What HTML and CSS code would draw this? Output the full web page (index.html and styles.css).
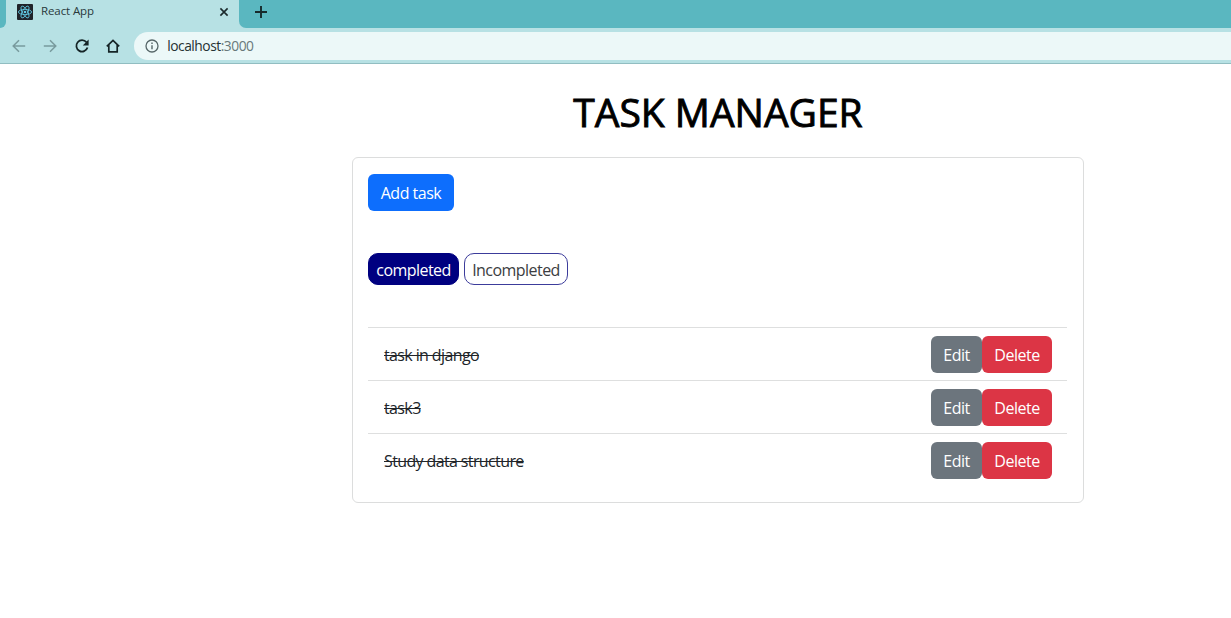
FILE: index.html
```html
<!DOCTYPE html>
<html lang="en">
<head>
<meta charset="utf-8">
<title>React App</title>
<link rel="stylesheet" href="styles.css">
</head>
<body>
<header class="browser">
  <div class="tabs">
    <div class="tab-before"></div>
    <div class="tab">
      <svg class="favicon" width="16" height="16" viewBox="0 0 16 16"><rect width="16" height="16" rx="1" fill="#20232a"/><g fill="none" stroke="#61c9e4" stroke-width=".85"><ellipse cx="8" cy="8" rx="6.6" ry="2.6"/><ellipse cx="8" cy="8" rx="6.6" ry="2.6" transform="rotate(60 8 8)"/><ellipse cx="8" cy="8" rx="6.6" ry="2.6" transform="rotate(120 8 8)"/></g><circle cx="8" cy="8" r="1.3" fill="#61c9e4"/></svg>
      <span class="tab-title">React App</span>
      <svg class="close" width="10" height="10" viewBox="0 0 10 10"><path d="M1.4 1.4l7.2 7.2M8.6 1.4L1.4 8.6" stroke="#1b2a2c" stroke-width="1.6"/></svg>
    </div>
    <div class="tab-after">
      <svg width="14" height="14" viewBox="0 0 14 14"><path d="M7 1v12M1 7h12" stroke="#162a2c" stroke-width="1.9"/></svg>
    </div>
  </div>
  <div class="toolbar">
    <svg class="nav" width="16" height="16" viewBox="0 0 16 16"><path d="M14.2 8H2.2M8 2.2L2.2 8L8 13.8" fill="none" stroke="#789a9d" stroke-width="1.5"/></svg>
    <svg class="nav" width="16" height="16" viewBox="0 0 16 16"><path d="M1.8 8h12M8 2.2L13.8 8L8 13.8" fill="none" stroke="#789a9d" stroke-width="1.5"/></svg>
    <svg class="nav" width="16" height="16" viewBox="0 0 16 16"><path d="M12.5 4.3A5.7 5.7 0 1 0 13.5 9.6" fill="none" stroke="#152426" stroke-width="1.8"/><path d="M14.6 1.5v5.9H8.8z" fill="#152426"/></svg>
    <svg class="nav" width="16" height="16" viewBox="0 0 16 16"><path d="M1.8 8.4L8 2.4l6.2 6M3.8 7v6.8h8.4V7" fill="none" stroke="#152426" stroke-width="1.7"/></svg>
    <div class="address">
      <svg width="14" height="14" viewBox="0 0 14 14"><circle cx="7" cy="7" r="6" fill="none" stroke="#566668" stroke-width="1.3"/><path d="M7 6.2v4M7 3.6v1.4" stroke="#566668" stroke-width="1.4"/></svg>
      <span class="url">localhost<span class="port">:3000</span></span>
    </div>
  </div>
</header>
<main class="page">
  <h1 class="title">TASK MANAGER</h1>
  <section class="card">
    <button class="btn add">Add task</button>
    <div class="filters">
      <span class="pill active">completed</span>
      <span class="pill">Incompleted</span>
    </div>
    <ul class="list">
      <li class="item"><span class="task">task in django</span><button class="btn edit">Edit</button><button class="btn delete">Delete</button></li>
      <li class="item"><span class="task">task3</span><button class="btn edit">Edit</button><button class="btn delete">Delete</button></li>
      <li class="item"><span class="task">Study data structure</span><button class="btn edit">Edit</button><button class="btn delete">Delete</button></li>
    </ul>
  </section>
</main>
</body>
</html>
```
FILE: styles.css
```css
* { box-sizing: border-box; }
body { margin: 0; height: 618px; overflow: hidden; background: #fff; color: #212529; font-family: "Open Sans", "Noto Sans", sans-serif; font-size: 16px; }
.browser { height: 64px; background: #b7e1e4; border-bottom: 1px solid #91bdc1; }
.tabs { display: flex; height: 28px; }
.tab-before { width: 6px; background: #5ab7c0; border-bottom-right-radius: 6px; }
.tab { width: 233px; display: flex; align-items: center; height: 24px; padding: 0 10px 0 11px; }
.tab-title { margin-left: 8px; font-size: 11.5px; letter-spacing: -0.1px; color: #29393b; line-height: 22px; margin-top: -2px; }
.close { margin-left: auto; }
.tab-after { flex: 1; background: #5ab7c0; border-bottom-left-radius: 7px; padding: 5px 0 0 15px; }
.tab-after svg { display: block; }
.toolbar { display: flex; align-items: center; height: 35px; padding-left: 11px; }
.nav { flex: none; margin-right: 15.3px; }
.address { flex: 1; display: flex; align-items: center; height: 28px; margin-left: -2px; padding-left: 11px; background: #ecf8f8; border-radius: 14px 0 0 14px; }
.url { margin: -1px 0 0 8px; font-size: 13.8px; letter-spacing: -0.48px; color: #263133; }
.port { color: #68787a; }
.page { width: 732px; margin-left: 352px; }
.title { margin: 24px 0 21px; font-size: 39px; line-height: 48px; font-weight: 500; color: #000; text-align: center; white-space: nowrap; -webkit-text-stroke: 0.9px #000; }
.card { height: 346px; border: 1px solid #dcdddd; border-radius: 6px; padding: 16px 16px 16px 15px; }
.btn { display: flex; align-items: center; justify-content: center; height: 37px; padding: 0; border: 0; border-radius: 6px; color: #fff; font: inherit; letter-spacing: -0.5px; white-space: nowrap; }
.add { width: 86px; background: #0d6efd; }
.filters { display: flex; gap: 5px; margin-top: 42px; }
.pill { display: flex; align-items: center; justify-content: center; width: 104px; height: 32px; padding-top: 2px; border: 1px solid #3c3c9b; border-radius: 10px; color: #3b3d41; letter-spacing: -0.55px; }
.active { width: 91px; background: #000080; border-color: #000080; color: #fff; }
.list { list-style: none; margin: 42px 0 0; padding: 0; }
.item { display: flex; align-items: center; height: 53px; padding: 0 15px 0 16px; border-top: 1px solid #dedfdf; }
.item .btn { padding-top: 2px; }
.task { margin-right: auto; padding-top: 2px; text-decoration: line-through 1.4px; letter-spacing: -0.62px; }
.edit { width: 51px; background: #6c757d; }
.delete { width: 70px; background: #dc3545; }
```
